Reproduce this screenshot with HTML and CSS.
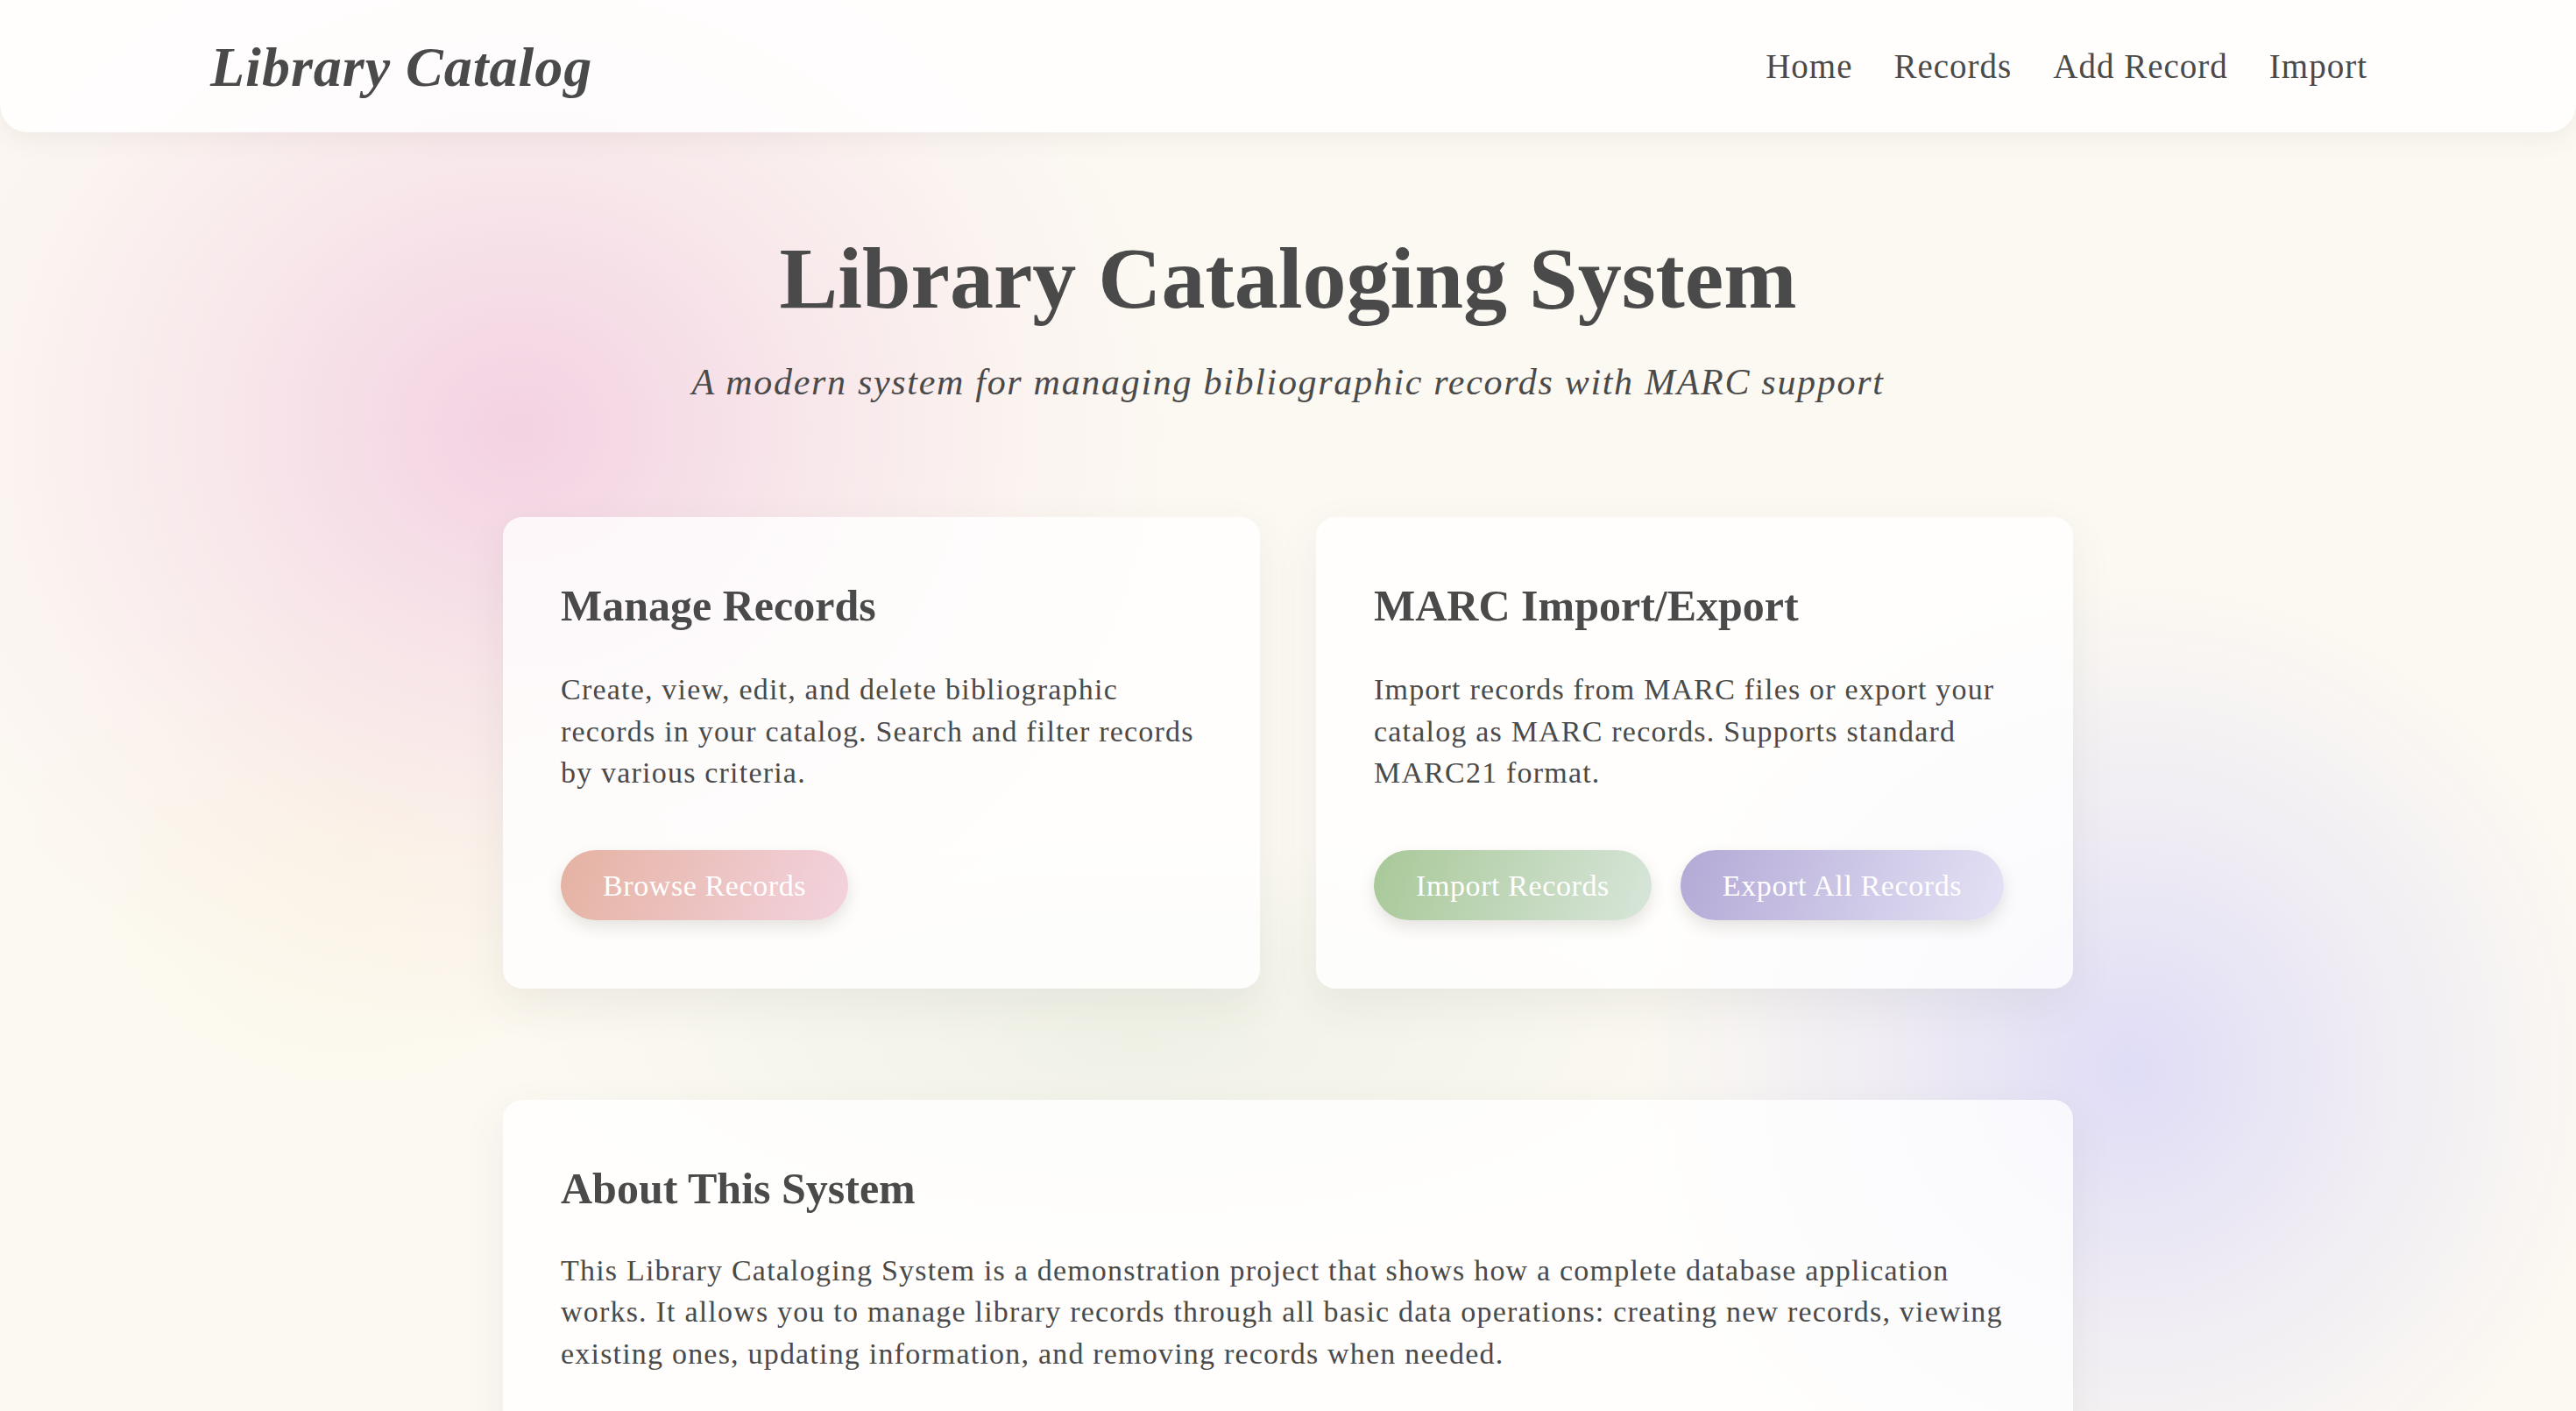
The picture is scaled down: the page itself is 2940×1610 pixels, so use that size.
FILE: index.html
```html
<!DOCTYPE html>
<html lang="en">
<head>
<meta charset="utf-8">
<title>Library Catalog</title>
<link rel="stylesheet" href="styles.css">
</head>
<body>
<header class="navbar">
  <div class="nav-inner">
    <a class="logo" href="#">Library Catalog</a>
    <nav class="nav-links">
      <a href="#">Home</a>
      <a href="#">Records</a>
      <a href="#">Add Record</a>
      <a href="#">Import</a>
    </nav>
  </div>
</header>
<main class="container">
  <section class="hero">
    <h1 class="hero-title">Library Cataloging System</h1>
    <p class="hero-subtitle">A modern system for managing bibliographic records with MARC support</p>
  </section>
  <section class="features">
    <div class="card">
      <h2 class="card-title">Manage Records</h2>
      <p class="card-text">Create, view, edit, and delete bibliographic records in your catalog. Search and filter records by various criteria.</p>
      <div class="actions">
        <a class="btn btn-pink" href="#">Browse Records</a>
      </div>
    </div>
    <div class="card">
      <h2 class="card-title">MARC Import/Export</h2>
      <p class="card-text">Import records from MARC files or export your catalog as MARC records. Supports standard MARC21 format.</p>
      <div class="actions">
        <a class="btn btn-green" href="#">Import Records</a>
        <a class="btn btn-purple" href="#">Export All Records</a>
      </div>
    </div>
  </section>
  <section class="card about">
    <h2 class="card-title">About This System</h2>
    <p class="card-text">This Library Cataloging System is a demonstration project that shows how a complete database application works. It allows you to manage library records through all basic data operations: creating new records, viewing existing ones, updating information, and removing records when needed.</p>
  </section>
</main>
</body>
</html>
```
FILE: styles.css
```css
* { box-sizing: border-box; }

html, body { margin: 0; padding: 0; }

body {
  min-height: 1610px;
  color: #4a4a4a;
  font-family: "Liberation Serif", "DejaVu Serif", serif;
  background:
    radial-gradient(ellipse 780px 700px at 590px 490px, rgba(241, 200, 222, 0.8) 0, rgba(241, 200, 222, 0.4) 40%, rgba(241, 200, 222, 0.12) 72%, rgba(241, 200, 222, 0) 100%),
    radial-gradient(ellipse 560px 560px at 2430px 1220px, rgba(220, 217, 247, 0.9) 0, rgba(220, 217, 247, 0.4) 50%, rgba(220, 217, 247, 0) 100%),
    radial-gradient(ellipse 380px 340px at 400px 980px, rgba(252, 247, 228, 0.7) 0, rgba(252, 247, 228, 0) 100%),
    radial-gradient(ellipse 700px 240px at 1300px 1190px, rgba(232, 236, 222, 0.6) 0, rgba(232, 236, 222, 0) 100%),
    #fcf9f2;
}

a { text-decoration: none; color: inherit; }

/* Navbar */
.navbar {
  height: 151px;
  background: rgba(255, 255, 255, 0.82);
  border-radius: 0 0 32px 32px;
  box-shadow: 0 6px 30px rgba(90, 80, 70, 0.08);
}

.nav-inner {
  height: 100%;
  padding: 0 238px 0 240px;
  display: flex;
  align-items: center;
  justify-content: space-between;
}

.logo {
  font-style: italic;
  font-weight: bold;
  font-size: 64px;
  letter-spacing: 1px;
  color: #4a4a4a;
  margin-top: 2px;
}

.nav-links {
  display: flex;
  gap: 47px;
}

.nav-links a {
  font-size: 39px;
  letter-spacing: 1px;
  color: #4a4a4a;
}

/* Main */
.container {
  width: 1792px;
  margin: 0 auto;
}

.hero {
  padding-top: 107px;
  text-align: center;
}

.hero-title {
  margin: 0;
  font-size: 100px;
  line-height: 120px;
  font-weight: bold;
}

.hero-subtitle {
  margin: 34px 0 0;
  font-size: 42px;
  line-height: 48px;
  letter-spacing: 1.7px;
  font-style: italic;
}

.features {
  margin-top: 130px;
  display: grid;
  grid-template-columns: 1fr 1fr;
  gap: 64px;
}

.card {
  background: rgba(255, 255, 255, 0.78);
  border-radius: 22px;
  padding: 71px 66px 78px;
  box-shadow: 0 18px 50px rgba(70, 80, 60, 0.08);
}

.card-title {
  margin: 0;
  font-size: 50px;
  line-height: 60px;
  font-weight: bold;
}

.card-text {
  margin: 42px 0 0;
  font-size: 34px;
  line-height: 47.5px;
  letter-spacing: 1.2px;
}

.actions {
  margin-top: 64px;
  display: flex;
  gap: 33px;
}

.btn {
  display: inline-block;
  height: 80px;
  padding: 17px 48px 15px;
  border-radius: 40px;
  font-size: 34px;
  line-height: 48px;
  letter-spacing: 0.6px;
  color: #ffffff;
  box-shadow: 0 8px 18px rgba(80, 70, 60, 0.14);
}

.btn-pink { background: linear-gradient(110deg, #e5b2a2 0%, #f3d3df 100%); }
.btn-green { background: linear-gradient(110deg, #a8c898 0%, #d8e6da 100%); }
.btn-purple { background: linear-gradient(110deg, #b3a9d6 0%, #e4e2f5 100%); }

.about {
  margin-top: 127px;
  padding-bottom: 120px;
}

.about .card-text { margin-top: 40px; }
```
